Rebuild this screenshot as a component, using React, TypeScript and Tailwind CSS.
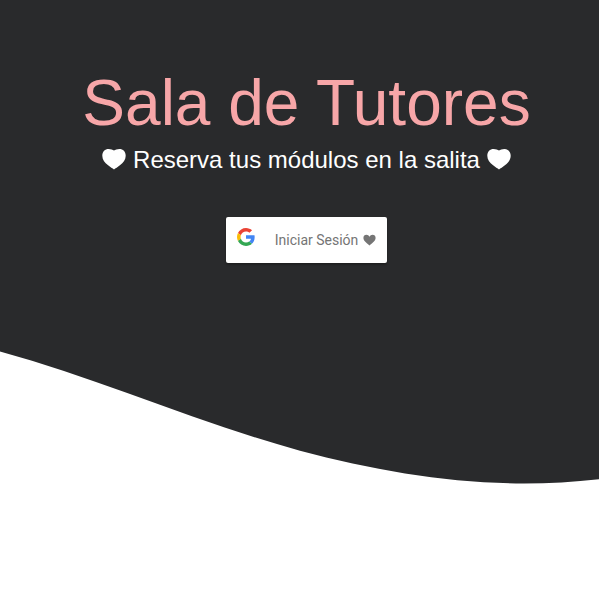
function HeartSuit({ className }: { className: string }) {
  return (
    <svg viewBox="0 0 24 22" className={className} fill="currentColor" aria-hidden="true">
      <path d="M12 20.600C10.600 19.300 8.300 18.300 6.100 16.300C2.600 13.500 .3 10.600 .3 6.700C.3 2.700 3 .1 6.600 .1C8.900 .1 10.700 .9 12 1.500C13.300 .9 15.100 .1 17.400 .1C21 .1 23.700 2.700 23.700 6.700C23.700 10.600 21.400 13.500 17.900 16.300C15.700 18.300 13.400 19.300 12 20.600Z" />
    </svg>
  );
}

function SmallHeart() {
  return (
    <svg viewBox="0 0 13 12" className="h-3 w-[13px]" fill="currentColor" aria-hidden="true">
      <path d="M6.500 11.500C5.500 9.800 .4 7.500 .4 3.900C.4 2 1.700 .8 3.400 .8C4.800 .8 5.900 1.500 6.500 2.800C7.100 1.500 8.200 .8 9.600 .8C11.300 .8 12.600 2 12.600 3.900C12.600 7.500 7.500 9.800 6.500 11.500Z" />
    </svg>
  );
}

function GoogleLogo() {
  return (
    <svg viewBox="0 0 18 18" className="size-[18px]" aria-hidden="true">
      <path fill="#EA4335" d="M9 3.480c1.690 0 2.830.73 3.480 1.340l2.540-2.480C13.460.89 11.430 0 9 0 5.480 0 2.440 2.020.96 4.960l2.910 2.260C4.600 5.050 6.620 3.480 9 3.480z" />
      <path fill="#4285F4" d="M17.640 9.200c0-.74-.06-1.280-.19-1.840H9v3.340h4.960c-.1.830-.64 2.080-1.840 2.920l2.840 2.200c1.700-1.570 2.680-3.880 2.680-6.620z" />
      <path fill="#FBBC05" d="M3.880 10.780A5.540 5.540 0 0 1 3.580 9c0-.62.11-1.220.29-1.780L.96 4.960A9.008 9.008 0 0 0 0 9c0 1.450.35 2.820.96 4.040l2.920-2.260z" />
      <path fill="#34A853" d="M9 18c2.430 0 4.470-.8 5.960-2.180l-2.840-2.200c-.76.53-1.780.9-3.120.9-2.380 0-4.400-1.570-5.120-3.740L.97 13.040C2.450 15.980 5.480 18 9 18z" />
    </svg>
  );
}

export default function App() {
  return (
    <main className="min-h-screen bg-white font-['Liberation_Sans',Arial,sans-serif]">
      <header className="flex h-[351px] flex-col items-center bg-[#292a2c] pt-[66px] pl-3.5 text-white">
        <h1 className="text-[64px] leading-[74px] whitespace-nowrap text-[#f7a6a8]">Sala de Tutores</h1>
        <p className="mt-1 flex items-center gap-[7px] text-2xl leading-8 whitespace-nowrap">
          <HeartSuit className="h-[22px] w-6" />
          Reserva tus módulos en la salita
          <HeartSuit className="h-[22px] w-6" />
        </p>
        <button
          type="button"
          className="mt-[41px] flex h-[46px] cursor-pointer items-center rounded-xs bg-white px-[11px] text-sm text-[#757575] shadow-[0_2px_2px_rgba(0,0,0,0.24),0_0_1px_rgba(0,0,0,0.24)]"
        >
          <span className="mr-5 pb-1.5">
            <GoogleLogo />
          </span>
          <span className="flex items-center gap-[5px] font-[Roboto,sans-serif] whitespace-nowrap">
            Iniciar Sesión
            <SmallHeart />
          </span>
        </button>
      </header>
      <svg viewBox="0 0 599 133" preserveAspectRatio="none" className="block h-[133px] w-full" aria-hidden="true">
        <path
          fill="#292a2c"
          d="M0 0V.5C100 28 200 72.500 300 99.700C375 119.500 449 132.400 524 132.400C549 132.400 574 131 599 128.200V0Z"
        />
      </svg>
    </main>
  );
}
